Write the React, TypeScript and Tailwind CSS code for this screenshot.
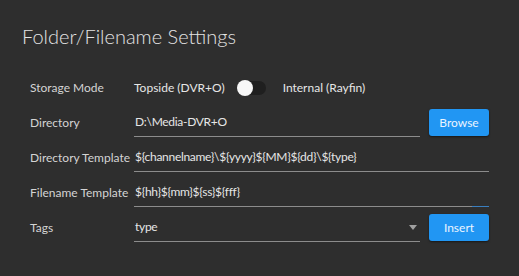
import React from "react";

const font = { fontFamily: "Lato, 'Open Sans', sans-serif" };

function Underline({ value, width, focus, arrow }: { value: string; width: string; focus?: boolean; arrow?: boolean }) {
  return (
    <div className={`relative flex h-[28px] items-center border-b border-[#8c8c8c] ${width}`}>
      <span className="whitespace-nowrap pl-[1px] text-[12px] tracking-[-0.3px] text-[#e6e6e6]">{value}</span>
      {arrow && (
        <svg className="absolute right-[3px] top-[11px]" width="8" height="5" viewBox="0 0 8 5">
          <path d="M0 0 L8 0 L4 5 Z" fill="#a0a0a0" />
        </svg>
      )}
      {focus && <div className="absolute bottom-[-1px] right-0 h-[1px] w-[17px] bg-[#3a7fc0]" />}
    </div>
  );
}

function Btn({ label }: { label: string }) {
  return (
    <button className="ml-[9px] flex h-[27px] w-[60px] items-center justify-center rounded-[3px] bg-[#2196f3] text-[12px] text-[#eaf4ff] shadow-[0_1px_2px_rgba(0,0,0,0.5)]">
      {label}
    </button>
  );
}

function Row({ label, children }: { label: string; children: React.ReactNode }) {
  return (
    <div className="flex h-[35px] items-center">
      <div className="w-[104px] shrink-0 whitespace-nowrap text-[12px] text-[#d4d4d4]">{label}</div>
      {children}
    </div>
  );
}

export default function App() {
  return (
    <div style={font} className="h-[276px] w-[519px] overflow-hidden bg-[#2e2e2e] pl-[30px]">
      <div className="-ml-[8px] pt-[21px] text-[20px] font-light leading-[30px] text-[#e4e4e4]">Folder/Filename Settings</div>
      <div className="mt-[19px]">
        <Row label="Storage Mode">
          <span className="text-[12px] text-[#e6e6e6]">Topside (DVR+O)</span>
          <div className="relative ml-[13px] h-[14px] w-[28px] rounded-full bg-[#1f1f1f]">
            <div className="absolute left-[-1px] top-[-1px] h-[16px] w-[16px] rounded-full bg-[#f7f7f7]" />
          </div>
          <span className="ml-[17px] text-[12px] text-[#e6e6e6]">Internal (Rayfin)</span>
        </Row>
        <Row label="Directory">
          <Underline value="D:\Media-DVR+O" width="w-[286px]" />
          <Btn label="Browse" />
        </Row>
        <Row label="Directory Template">
          <Underline value="${channelname}\${yyyy}${MM}${dd}\${type}" width="w-[355px]" />
        </Row>
        <Row label="Filename Template">
          <Underline value="${hh}${mm}${ss}${fff}" width="w-[355px]" focus />
        </Row>
        <Row label="Tags">
          <Underline value="type" width="w-[286px]" arrow />
          <Btn label="Insert" />
        </Row>
      </div>
    </div>
  );
}
